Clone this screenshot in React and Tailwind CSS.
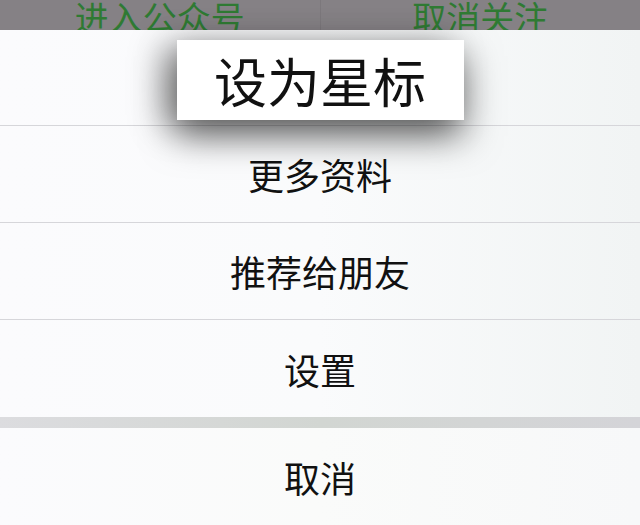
import React from "react";

const rows = ["更多资料", "推荐给朋友", "设置"];

export default function App() {
  return (
    <div
      className="w-[640px] h-[525px] overflow-hidden bg-[#fbfbfd] relative"
      style={{ fontFamily: '"Noto Sans CJK SC", "Noto Sans", sans-serif' }}
    >
      {/* top bar behind the sheet */}
      <div className="h-[30px] bg-[#858185] flex overflow-hidden">
        <div className="flex-1 flex justify-center items-end">
          <span className="text-[34px] leading-[34px] text-[#2f7a33] mb-[-4px]">进入公众号</span>
        </div>
        <div className="w-px bg-[#7c787c]" />
        <div className="flex-1 flex justify-center items-end">
          <span className="text-[34px] leading-[34px] text-[#2f7a33] mb-[-4px]">取消关注</span>
        </div>
      </div>

      <div className="bg-gradient-to-r from-[#fbfbfd] via-[#fafbfc] to-[#f1f4f4]">
        <div className="h-[96px] border-b border-[#d6d6da] flex justify-center items-start pt-[10px] relative z-10">
          <div className="w-[287px] h-[80px] bg-white flex items-center justify-center shadow-[0_16px_36px_rgba(0,0,0,0.5),-14px_6px_34px_rgba(0,0,0,0.35)]">
            <span className="text-[53px] leading-none text-[#111]">设为星标</span>
          </div>
        </div>
        {rows.map((r, i) => (
          <div
            key={r}
            className={
              "h-[97px] flex items-center justify-center " +
              (i < rows.length - 1 ? "border-b border-[#d6d6da]" : "")
            }
          >
            <span className="text-[36px] text-[#111] leading-none">{r}</span>
          </div>
        ))}
      </div>

      <div className="h-[11px] bg-gradient-to-r from-[#dcdcdf] via-[#d2d6d2] to-[#d4d4d8]" />

      <div className="h-[97px] flex items-center justify-center bg-gradient-to-r from-[#fbfbfd] via-[#fafbfa] to-[#f7f8f9]">
        <span className="text-[36px] text-[#111] leading-none">取消</span>
      </div>
    </div>
  );
}
